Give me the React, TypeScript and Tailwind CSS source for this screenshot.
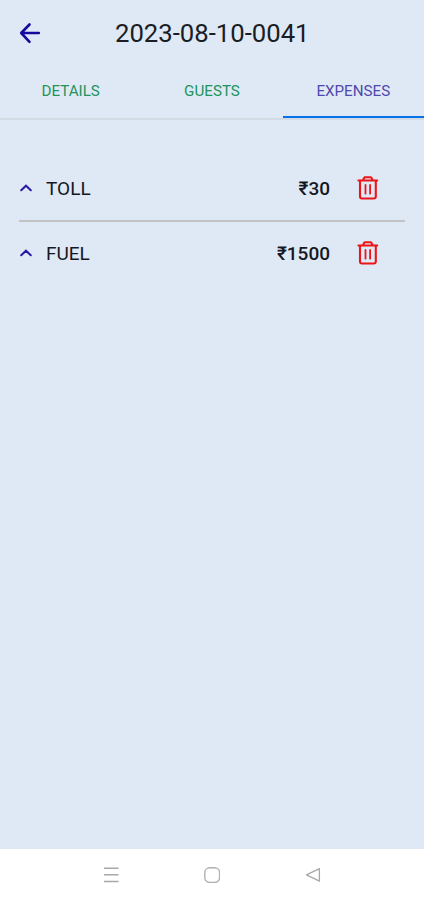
import React from "react";

type Expense = {
  name: string;
  amount: number;
};

const tabs = ["DETAILS", "GUESTS", "EXPENSES"];

const expenses: Expense[] = [
  { name: "TOLL", amount: 30 },
  { name: "FUEL", amount: 1500 },
];

function BackIcon() {
  return (
    <svg className="w-6 h-6" viewBox="0 0 24 24" fill="none" stroke="#1508a0" strokeWidth="2.6" strokeLinecap="round" strokeLinejoin="round">
      <path d="M20.8 12H3.5M11.5 3.5L3.2 12l8.3 8.8" />
    </svg>
  );
}

function ChevronUpIcon() {
  return (
    <svg className="w-3 h-2" viewBox="0 0 12 8" fill="none" stroke="#2a1aa5" strokeWidth="2" strokeLinecap="round">
      <path d="M1.2 6.3L6 1.7l4.8 4.6" />
    </svg>
  );
}

function TrashIcon() {
  return (
    <svg className="w-6 h-6" viewBox="0 0 24 24" fill="none" stroke="#ee1519" strokeWidth="2.1" strokeLinecap="round" strokeLinejoin="round">
      <path d="M2.4 4.5h18.8M6.9 4.2l1.2-2.3a1.2 1.2 0 0 1 1-.6h5.4a1.2 1.2 0 0 1 1 .6l1.2 2.3" />
      <path d="M4 4.9v15.6a2 2 0 0 0 2 2h11.8a2 2 0 0 0 2-2V4.9" />
      <path d="M9.5 8.9v8.8M14.1 8.9v8.8" strokeWidth="1.8" />
    </svg>
  );
}

function ExpenseRow({ expense }: { expense: Expense }) {
  return (
    <li className="flex h-16 items-center border-[#c3c3c6] pl-px pr-[25px] text-[19px] text-[#15181f] not-first:border-t-2">
      <ChevronUpIcon />
      <span className="ml-[14px] pt-0.5">{expense.name}</span>
      <span className="ml-auto pt-0.5 font-medium">₹{expense.amount}</span>
      <button className="ml-[26px]" aria-label="Delete">
        <TrashIcon />
      </button>
    </li>
  );
}

function NavBar() {
  return (
    <nav className="flex h-[51px] items-center justify-between bg-white px-[103px]">
      <svg className="w-4 h-4" viewBox="0 0 16 16" fill="none" stroke="#a8a8a8" strokeWidth="1.4">
        <path d="M1 1.2h14.5M1 7.8h14.5M1 14.5h14.5" />
      </svg>
      <svg className="w-4 h-4" viewBox="0 0 16 16" fill="none" stroke="#b0b0b0" strokeWidth="1.4">
        <rect x="0.8" y="0.8" width="14.8" height="14.6" rx="4.8" />
      </svg>
      <svg className="w-4 h-4" viewBox="0 0 16 16" fill="none" stroke="#a8a8a8" strokeWidth="1.3" strokeLinejoin="round">
        <path d="M14.4 1.6v12.6L1.5 7.8z" />
      </svg>
    </nav>
  );
}

export default function App() {
  return (
    <div className="flex h-[900px] w-[424px] flex-col bg-[#dfe9f5] font-['Roboto',sans-serif]">
      <header className="border-b-2 border-[#d2dae4]">
        <div className="grid h-[66px] grid-cols-[115px_1fr] items-center">
          <button className="pl-[18px]" aria-label="Back">
            <BackIcon />
          </button>
          <h1 className="text-[25.7px] text-[#1a1d24]">2023-08-10-0041</h1>
        </div>
        <div className="grid h-[52px] grid-cols-3 text-[15.2px]">
          {tabs.map((tab) => (
            <button
              key={tab}
              className={
                tab === "EXPENSES"
                  ? "border-b-2 border-[#0870e8] pt-px text-[#5048ae]"
                  : "border-b-2 border-transparent pt-px text-[#22945c]"
              }
            >
              {tab}
            </button>
          ))}
        </div>
      </header>

      <main className="flex-1 px-[19px] pt-9">
        <ul>
          {expenses.map((expense) => (
            <ExpenseRow key={expense.name} expense={expense} />
          ))}
        </ul>
      </main>

      <NavBar />
    </div>
  );
}
